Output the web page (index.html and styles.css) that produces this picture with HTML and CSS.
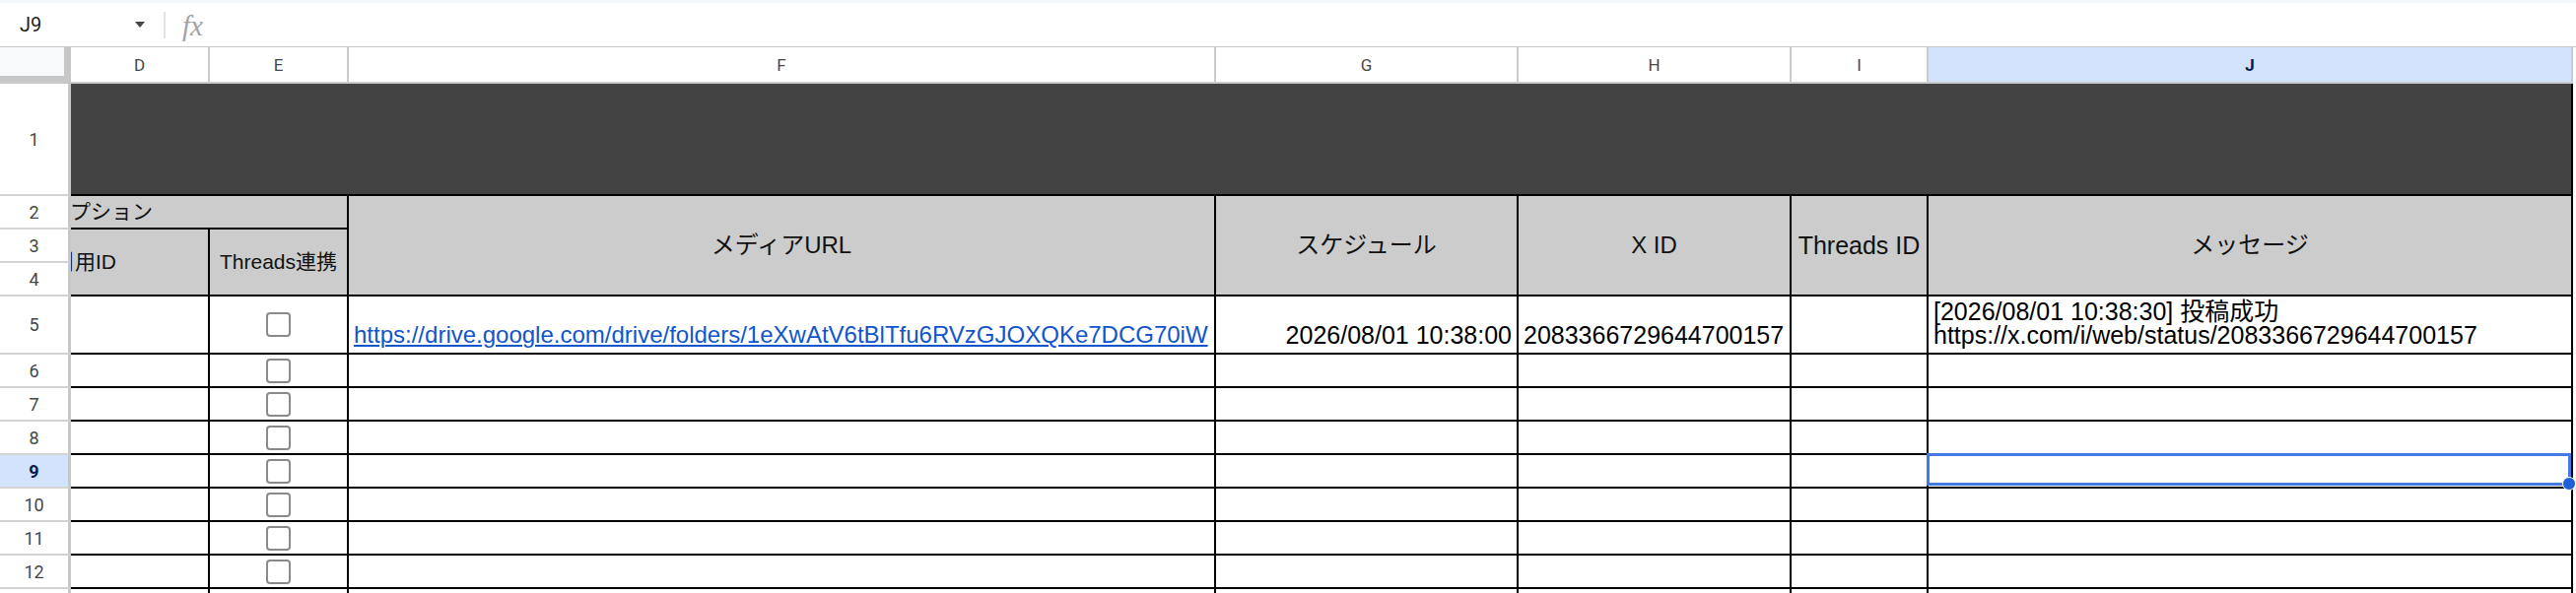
FILE: index.html
```html
<!DOCTYPE html>
<html lang="ja">
<head>
<meta charset="utf-8">
<title>Sheet</title>
<link rel="stylesheet" href="styles.css">
</head>
<body>
<div class="app">
  <div class="formula-bar">
    <div class="namebox"><span class="ref">J9</span><span class="caret"></span></div>
    <div class="fb-sep"></div>
    <span class="fx">fx</span>
  </div>
  <div class="sheet">
    <div class="corner"></div>
    <div class="ch">D</div>
    <div class="ch">E</div>
    <div class="ch">F</div>
    <div class="ch">G</div>
    <div class="ch">H</div>
    <div class="ch">I</div>
    <div class="ch sel">J</div>

    <div class="rh">1</div>
    <div class="c band"></div>

    <div class="rh">2</div>
    <div class="c hd sm span2c left"><span class="clip-opt">オプション</span></div>
    <div class="c hd span3r">メディアURL</div>
    <div class="c hd span3r">スケジュール</div>
    <div class="c hd span3r">X ID</div>
    <div class="c hd span3r lg">Threads ID</div>
    <div class="c hd span3r">メッセージ</div>

    <div class="rh">3</div>
    <div class="c hd sm span2r left"><span class="clip-ref">引用ID</span></div>
    <div class="c hd sm span2r">Threads連携</div>

    <div class="rh">4</div>

    <div class="rh">5</div>
    <div class="c"></div>
    <div class="c cb-cell"><span class="cb"></span></div>
    <div class="c"><span class="link">https://drive.google.com/drive/folders/1eXwAtV6tBlTfu6RVzGJOXQKe7DCG70iW</span></div>
    <div class="c right">2026/08/01 10:38:00</div>
    <div class="c">2083366729644700157</div>
    <div class="c"></div>
    <div class="c msg"><div>[2026/08/01 10:38:30] 投稿成功<br>https://x.com/i/web/status/2083366729644700157</div></div>

    <div class="rh">6</div>
    <div class="c"></div><div class="c cb-cell"><span class="cb"></span></div><div class="c"></div><div class="c"></div><div class="c"></div><div class="c"></div><div class="c"></div>

    <div class="rh">7</div>
    <div class="c"></div><div class="c cb-cell"><span class="cb"></span></div><div class="c"></div><div class="c"></div><div class="c"></div><div class="c"></div><div class="c"></div>

    <div class="rh">8</div>
    <div class="c"></div><div class="c cb-cell"><span class="cb"></span></div><div class="c"></div><div class="c"></div><div class="c"></div><div class="c"></div><div class="c"></div>

    <div class="rh sel">9</div>
    <div class="c"></div><div class="c cb-cell"><span class="cb"></span></div><div class="c"></div><div class="c"></div><div class="c"></div><div class="c"></div>
    <div class="c active"><div class="selection"><span class="handle"></span></div></div>

    <div class="rh">10</div>
    <div class="c"></div><div class="c cb-cell"><span class="cb"></span></div><div class="c"></div><div class="c"></div><div class="c"></div><div class="c"></div><div class="c"></div>

    <div class="rh">11</div>
    <div class="c"></div><div class="c cb-cell"><span class="cb"></span></div><div class="c"></div><div class="c"></div><div class="c"></div><div class="c"></div><div class="c"></div>

    <div class="rh">12</div>
    <div class="c"></div><div class="c cb-cell"><span class="cb"></span></div><div class="c"></div><div class="c"></div><div class="c"></div><div class="c"></div><div class="c"></div>

    <div class="rh">13</div>
    <div class="c"></div><div class="c cb-cell"><span class="cb"></span></div><div class="c"></div><div class="c"></div><div class="c"></div><div class="c"></div><div class="c"></div>
  </div>
</div>
</body>
</html>
```

FILE: styles.css
```css
* { box-sizing: border-box; }

html, body {
  margin: 0;
  padding: 0;
  background: #ffffff;
}

body {
  width: 2614px;
  height: 602px;
  overflow: hidden;
  font-family: "Liberation Sans", "Noto Sans CJK JP", sans-serif;
  color: #000;
}

.app {
  width: 2614px;
  height: 602px;
  overflow: hidden;
}

/* ---------- formula bar ---------- */
.formula-bar {
  height: 48px;
  border-top: 3px solid #f3f6fb;
  border-bottom: 1px solid #c4c7c5;
  display: flex;
  align-items: center;
  background: #fff;
}

.namebox {
  width: 150px;
  padding: 0 3px 0 20px;
  display: flex;
  align-items: center;
  justify-content: space-between;
}

.ref {
  font-family: Roboto, "Liberation Sans", sans-serif;
  font-size: 20px;
  color: #1f1f1f;
}

.caret {
  width: 0;
  height: 0;
  border-left: 5.5px solid transparent;
  border-right: 5.5px solid transparent;
  border-top: 6px solid #444746;
}

.fb-sep {
  width: 2px;
  height: 27px;
  background: #e0e2e4;
  margin-left: 16px;
}

.fx {
  margin-left: 17px;
  font-family: "Liberation Serif", serif;
  font-style: italic;
  font-size: 29px;
  color: #a0a4a8;
  line-height: 1;
  padding-top: 3px;
}

/* ---------- grid ---------- */
.sheet {
  display: grid;
  grid-template-columns: 72px 141px 141px 880px 307px 277px 139px 654px 3px;
  grid-template-rows: 37px 114px 34px 34px 34px 59px repeat(8, 34px);
  height: 554px;
  overflow: hidden;
  position: relative;
}

.corner {
  background: #f8f9fa;
  border-right: 7px solid #c7c7c7;
  border-bottom: 8px solid #c7c7c7;
}

.ch {
  display: flex;
  align-items: center;
  justify-content: center;
  border-right: 2px solid #c9cbcd;
  border-bottom: 2px solid #c9cbcd;
  font-family: Roboto, "Liberation Sans", sans-serif;
  font-size: 17px;
  color: #444746;
  background: #fff;
}

.ch.sel {
  background: #d3e3fd;
  color: #041e49;
  font-weight: 700;
}

.rh {
  grid-column: 1;
  display: flex;
  align-items: center;
  justify-content: center;
  border-right: 3px solid #c7c7c7;
  border-bottom: 2px solid #d3d3d3;
  font-family: Roboto, "Liberation Sans", sans-serif;
  font-size: 18px;
  color: #444746;
  background: #fff;
}

.rh.sel {
  background: #d3e3fd;
  color: #041e49;
  font-weight: 700;
}

.c {
  border-right: 2px solid #000;
  border-bottom: 2px solid #000;
  background: #fff;
  display: flex;
  align-items: flex-end;
  padding: 0 5px 4px 5px;
  font-size: 25px;
  line-height: 28px;
  white-space: nowrap;
  overflow: hidden;
}

.band {
  grid-column: span 7;
  background: #434343;
}

.hd {
  background: #cccccc;
  align-items: center;
  justify-content: center;
  padding: 0 2px;
  font-size: 24px;
  color: #111;
}

.hd.sm { font-size: 21px; }
.hd.lg { font-size: 25px; }

.span2c { grid-column: span 2; }
.span3r { grid-row: span 3; }
.span2r { grid-row: span 2; }

.left {
  justify-content: flex-start;
  padding-left: 0;
}

.clip-opt { margin-left: -22px; flex-shrink: 0; }
.clip-ref { margin-left: -17px; flex-shrink: 0; }

.right {
  justify-content: flex-end;
}

.cb-cell {
  align-items: center;
  justify-content: center;
  padding: 0;
}

.cb {
  display: block;
  width: 25px;
  height: 25px;
  border: 2px solid #8a8a8a;
  border-radius: 4px;
  background: #fff;
  flex-shrink: 0;
}

.link {
  color: #1155cc;
  text-decoration: underline;
  text-decoration-thickness: 2px;
  text-underline-offset: 2px;
  font-size: 24px;
}

.msg {
  white-space: nowrap;
  line-height: 24px;
  padding-bottom: 6px;
}

.active {
  position: relative;
  overflow: visible;
}

.selection {
  position: absolute;
  left: -2px;
  top: -2px;
  right: 0;
  bottom: 1px;
  border: 3px solid #4479e3;
  z-index: 3;
}

.handle {
  position: absolute;
  right: -8px;
  bottom: -8px;
  width: 14px;
  height: 14px;
  border-radius: 50%;
  background: #1f5fd8;
  border: 1.5px solid #fff;
}
```
